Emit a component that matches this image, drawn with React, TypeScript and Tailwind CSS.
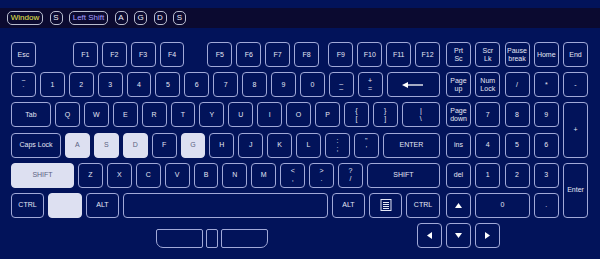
import React from 'react'

type KeyProps = {
  w?: string
  top?: string
  label?: React.ReactNode
  pressed?: boolean
  className?: string
}

function Key({ w = 'w-[24.9px]', top, label, pressed, className = '' }: KeyProps) {
  return (
    <div
      className={`${w} h-full shrink-0 rounded-[4px] border flex flex-col items-center justify-center leading-[8px] text-[7px] ${
        pressed
          ? 'bg-[#dde0f1] border-[#dde0f1] text-[#5b6283]'
          : 'border-[#a1a9d8] text-[#e4e7f5]'
      } ${className}`}
    >
      {top && <span>{top}</span>}
      {label}
    </div>
  )
}

function Tri({ dir }: { dir: 'up' | 'down' | 'left' | 'right' }) {
  const pts = {
    up: '3.5,1 7,6 0,6',
    down: '0,1 7,1 3.5,6',
    left: '1,3.5 6,0 6,7',
    right: '1,0 6,3.5 1,7',
  }[dir]
  return (
    <svg width="7" height="7" viewBox="0 0 7 7">
      <polygon points={pts} fill="#ffffff" />
    </svg>
  )
}

function Chip({ w, text, color = 'text-[#eef0f8]' }: { w: string; text: string; color?: string }) {
  return (
    <div
      className={`${w} h-[14px] rounded-[5px] border border-[#b8bccf] flex items-center justify-center text-[8px] ${color}`}
    >
      {text}
    </div>
  )
}

const row = 'flex h-[25px] gap-[4px]'

export default function App() {
  return (
    <div
      className="w-[600px] h-[259px] bg-[#02135a] overflow-hidden"
      style={{ fontFamily: '"Liberation Sans", Arial, sans-serif' }}
    >
      <div className="pt-[8px]">
        <div className="h-[20px] bg-[#0b0a30] flex items-center pl-[7px] gap-[6.5px]">
          <Chip w="w-[36px]" text="Window" color="text-[#ecea4a]" />
          <Chip w="w-[13px]" text="S" />
          <Chip w="w-[39px]" text="Left Shift" color="text-[#a79cff]" />
          <Chip w="w-[13px]" text="A" />
          <Chip w="w-[13px]" text="G" />
          <Chip w="w-[13px]" text="D" />
          <Chip w="w-[13px]" text="S" />
        </div>
      </div>

      <div className="mt-[14px] pl-[11px] flex">
        {/* main block */}
        <div className="w-[429px] flex flex-col gap-[5.2px]">
          <div className={row}>
            <Key label="Esc" />
            <div className="flex gap-[4px] ml-[33px]">
              {['F1', 'F2', 'F3', 'F4'].map((k) => (
                <Key key={k} label={k} />
              ))}
            </div>
            <div className="flex gap-[4px] ml-[19px]">
              {['F5', 'F6', 'F7', 'F8'].map((k) => (
                <Key key={k} label={k} />
              ))}
            </div>
            <div className="flex gap-[4px] ml-auto">
              {['F9', 'F10', 'F11', 'F12'].map((k) => (
                <Key key={k} label={k} />
              ))}
            </div>
          </div>

          <div className={row}>
            <Key top="~" label="`" />
            {['1', '2', '3', '4', '5', '6', '7', '8', '9', '0'].map((k) => (
              <Key key={k} label={k} />
            ))}
            <Key top="_" label="–" />
            <Key top="+" label="=" />
            <Key
              w="flex-1"
              label={
                <svg width="22" height="8" viewBox="0 0 22 8">
                  <line x1="3" y1="4" x2="21" y2="4" stroke="#ffffff" strokeWidth="1.3" />
                  <polygon points="0,4 6,1 6,7" fill="#ffffff" />
                </svg>
              }
            />
          </div>

          <div className={row}>
            <Key w="w-[40px]" label="Tab" />
            {['Q', 'W', 'E', 'R', 'T', 'Y', 'U', 'I', 'O', 'P'].map((k) => (
              <Key key={k} label={k} />
            ))}
            <Key top="{" label="[" />
            <Key top="}" label="]" />
            <Key w="flex-1" top="|" label="\" />
          </div>

          <div className={row}>
            <Key w="w-[50px]" label="Caps Lock" />
            {['A', 'S', 'D', 'F', 'G', 'H', 'J', 'K', 'L'].map((k) => (
              <Key key={k} label={k} pressed={['A', 'S', 'D', 'G'].includes(k)} />
            ))}
            <Key top=":" label=";" />
            <Key top={'"'} label="'" />
            <Key w="flex-1" label="ENTER" />
          </div>

          <div className={row}>
            <Key w="w-[63px]" label="SHIFT" pressed />
            {['Z', 'X', 'C', 'V', 'B', 'N', 'M'].map((k) => (
              <Key key={k} label={k} />
            ))}
            <Key top="<" label="," />
            <Key top=">" label="." />
            <Key top="?" label="/" />
            <Key w="flex-1" label="SHIFT" />
          </div>

          <div className={row}>
            <Key w="w-[33px]" label="CTRL" />
            <Key w="w-[34px]" pressed />
            <Key w="w-[33px]" label="ALT" />
            <Key w="flex-1" />
            <Key w="w-[33px]" label="ALT" />
            <Key
              w="w-[33px]"
              label={
                <svg width="12" height="12" viewBox="0 0 12 12">
                  <rect x="1" y="0.5" width="10" height="11" fill="none" stroke="#e4e7f5" strokeWidth="1" />
                  <line x1="3" y1="3.5" x2="9" y2="3.5" stroke="#e4e7f5" strokeWidth="1" />
                  <line x1="3" y1="5.5" x2="9" y2="5.5" stroke="#e4e7f5" strokeWidth="1" />
                  <line x1="3" y1="7.5" x2="9" y2="7.5" stroke="#e4e7f5" strokeWidth="1" />
                  <line x1="3" y1="9.5" x2="9" y2="9.5" stroke="#e4e7f5" strokeWidth="1" />
                </svg>
              }
            />
            <Key w="w-[34px]" label="CTRL" />
          </div>
        </div>

        {/* nav + numpad */}
        <div className="ml-[6px] grid grid-cols-[repeat(5,25px)] grid-rows-[repeat(6,25px)] gap-x-[4.25px] gap-y-[5.2px]">
          <Key w="w-full" top="Prt" label="Sc" />
          <Key w="w-full" top="Scr" label="Lk" />
          <Key w="w-full" top="Pause" label="break" />
          <Key w="w-full" label="Home" />
          <Key w="w-full" label="End" />

          <Key w="w-full" top="Page" label="up" />
          <Key w="w-full" top="Num" label="Lock" />
          <Key w="w-full" label="/" />
          <Key w="w-full" label="*" />
          <Key w="w-full" label="-" />

          <Key w="w-full" top="Page" label="down" />
          <Key w="w-full" label="7" />
          <Key w="w-full" label="8" />
          <Key w="w-full" label="9" />
          <Key w="w-full" label="+" className="row-span-2" />

          <Key w="w-full" label="ins" />
          <Key w="w-full" label="4" />
          <Key w="w-full" label="5" />
          <Key w="w-full" label="6" />

          <Key w="w-full" label="del" />
          <Key w="w-full" label="1" />
          <Key w="w-full" label="2" />
          <Key w="w-full" label="3" />
          <Key w="w-full" label="Enter" className="row-span-2" />

          <Key w="w-full" label={<Tri dir="up" />} />
          <Key w="w-full" label="0" className="col-span-2" />
          <Key w="w-full" label="." />
        </div>
      </div>

      <div className="mt-[5px] pl-[11px] flex h-[25px]">
        <div className="ml-[145px] mt-[6px] flex gap-[3px] h-[19px]">
          <div className="w-[47px] h-full border border-[#a1a9d8] rounded-t-[2px] rounded-bl-[7px] rounded-br-[2px]" />
          <div className="w-[12px] h-full border border-[#a1a9d8] rounded-[2px]" />
          <div className="w-[47px] h-full border border-[#a1a9d8] rounded-t-[2px] rounded-br-[7px] rounded-bl-[2px]" />
        </div>
        <div className="ml-[149px] flex gap-[4px] h-[25px]">
          <Key label={<Tri dir="left" />} />
          <Key label={<Tri dir="down" />} />
          <Key label={<Tri dir="right" />} />
        </div>
      </div>
    </div>
  )
}
